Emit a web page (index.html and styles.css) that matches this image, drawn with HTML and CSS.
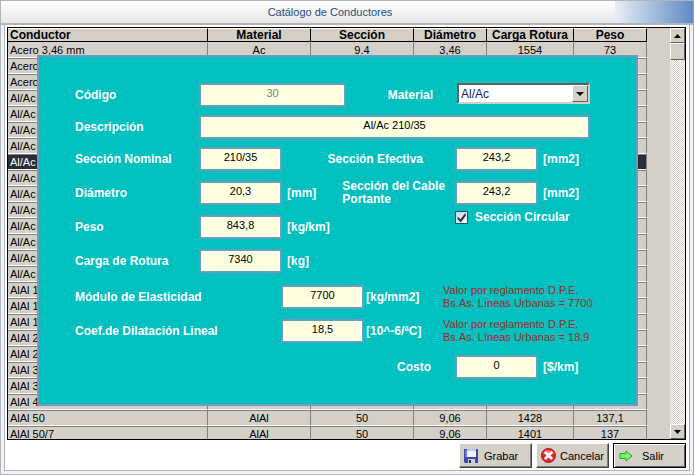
FILE: index.html
```
<!DOCTYPE html>
<html lang="es">
<head>
    <meta charset="UTF-8">
    <meta name="viewport" content="width=device-width, initial-scale=1.0">
    <title>Catálogo de Conductores</title>
    <link rel="stylesheet" href="styles.css">
</head>
<body>
    <header class="titlebar"><h1>Catálogo de Conductores</h1></header>

    <main class="frame">
        <div class="catalog">
            <div class="list">
                <table>
                    <thead>
                        <tr>
                            <th>Conductor</th>
                            <th class="c2">Material</th>
                            <th class="c3">Sección</th>
                            <th class="c4">Diámetro</th>
                            <th class="c5">Carga Rotura</th>
                            <th class="c6">Peso</th>
                        </tr>
                    </thead>
                    <tbody>
                        <tr><td>Acero 3,46 mm</td><td>Ac</td><td>9.4</td><td>3,46</td><td>1554</td><td>73</td></tr>
                        <tr><td>Acero</td><td></td><td></td><td></td><td></td><td></td></tr>
                        <tr><td>Acero</td><td></td><td></td><td></td><td></td><td></td></tr>
                        <tr><td>Al/Ac</td><td></td><td></td><td></td><td></td><td></td></tr>
                        <tr><td>Al/Ac</td><td></td><td></td><td></td><td></td><td></td></tr>
                        <tr><td>Al/Ac</td><td></td><td></td><td></td><td></td><td></td></tr>
                        <tr><td>Al/Ac</td><td></td><td></td><td></td><td></td><td></td></tr>
                        <tr class="selected"><td>Al/Ac</td><td></td><td></td><td></td><td></td><td></td></tr>
                        <tr><td>Al/Ac</td><td></td><td></td><td></td><td></td><td></td></tr>
                        <tr><td>Al/Ac</td><td></td><td></td><td></td><td></td><td></td></tr>
                        <tr><td>Al/Ac</td><td></td><td></td><td></td><td></td><td></td></tr>
                        <tr><td>Al/Ac</td><td></td><td></td><td></td><td></td><td></td></tr>
                        <tr><td>Al/Ac</td><td></td><td></td><td></td><td></td><td></td></tr>
                        <tr><td>Al/Ac</td><td></td><td></td><td></td><td></td><td></td></tr>
                        <tr><td>Al/Ac</td><td></td><td></td><td></td><td></td><td></td></tr>
                        <tr><td>AlAl 1</td><td></td><td></td><td></td><td></td><td></td></tr>
                        <tr><td>AlAl 1</td><td></td><td></td><td></td><td></td><td></td></tr>
                        <tr><td>AlAl 1</td><td></td><td></td><td></td><td></td><td></td></tr>
                        <tr><td>AlAl 2</td><td></td><td></td><td></td><td></td><td></td></tr>
                        <tr><td>AlAl 2</td><td></td><td></td><td></td><td></td><td></td></tr>
                        <tr><td>AlAl 3</td><td></td><td></td><td></td><td></td><td></td></tr>
                        <tr><td>AlAl 3</td><td></td><td></td><td></td><td></td><td></td></tr>
                        <tr><td>AlAl 4</td><td></td><td></td><td></td><td></td><td></td></tr>
                        <tr><td>AlAl 50</td><td>AlAl</td><td>50</td><td>9,06</td><td>1428</td><td>137,1</td></tr>
                        <tr><td>AlAl 50/7</td><td>AlAl</td><td>50</td><td>9,06</td><td>1401</td><td>137</td></tr>
                    </tbody>
                </table>
            </div>
            <div class="scrollbar">
                <button type="button" class="arrow" aria-label="Subir">
                    <svg width="7" height="4" viewBox="0 0 7 4"><path d="M0 4L3.500 0L7 4z"/></svg>
                </button>
                <div class="thumb"></div>
                <div class="track"></div>
                <button type="button" class="arrow" aria-label="Bajar">
                    <svg width="7" height="4" viewBox="0 0 7 4"><path d="M0 0H7L3.500 4z"/></svg>
                </button>
            </div>

            <form class="editor" id="editor">
                <div class="row">
                    <label class="name" for="codigo">Código</label>
                    <input class="wide" type="text" id="codigo" value="30" disabled>
                    <label class="side-name" for="material">Material</label>
                    <div class="select">
                        <select id="material"><option>Al/Ac</option></select>
                        <span class="drop"><svg width="8" height="4" viewBox="0 0 8 4"><path d="M0 0H8L4 4z"/></svg></span>
                    </div>
                </div>
                <div class="row">
                    <label class="name" for="descripcion">Descripción</label>
                    <input class="full" type="text" id="descripcion" value="Al/Ac 210/35">
                </div>

                <div class="columns">
                    <div class="left">
                        <div class="row">
                            <label class="name" for="nominal">Sección Nominal</label>
                            <input type="text" id="nominal" value="210/35">
                        </div>
                        <div class="row">
                            <label class="name" for="diametro">Diámetro</label>
                            <input type="text" id="diametro" value="20,3">
                            <span class="unit">[mm]</span>
                        </div>
                        <div class="row">
                            <label class="name" for="peso">Peso</label>
                            <input type="text" id="peso" value="843,8">
                            <span class="unit">[kg/km]</span>
                        </div>
                        <div class="row">
                            <label class="name" for="carga">Carga de Rotura</label>
                            <input type="text" id="carga" value="7340">
                            <span class="unit">[kg]</span>
                        </div>
                    </div>
                    <div class="right">
                        <div class="row">
                            <label class="side-name apart" for="efectiva">Sección Efectiva</label>
                            <div class="side">
                                <input type="text" id="efectiva" value="243,2">
                                <span class="unit">[mm2]</span>
                            </div>
                        </div>
                        <div class="row">
                            <label class="side-name two-lines" for="portante">Sección del Cable<br>Portante</label>
                            <div class="side">
                                <input type="text" id="portante" value="243,2">
                                <span class="unit">[mm2]</span>
                            </div>
                        </div>
                        <label class="check"><input type="checkbox" checked>Sección Circular</label>
                    </div>
                </div>

                <div class="row">
                    <label class="long-name" for="modulo">Módulo de Elasticidad</label>
                    <input type="text" id="modulo" value="7700">
                    <span class="unit near">[kg/mm2]</span>
                    <p class="note">Valor por reglamento D.P.E.<br>Bs.As. Líneas Urbanas = 7700</p>
                </div>
                <div class="row coef">
                    <label class="long-name" for="coef">Coef.de Dilatación Lineal</label>
                    <input type="text" id="coef" value="18,5">
                    <span class="unit near">[10^-6/ªC]</span>
                    <p class="note">Valor por reglamento D.P.E.<br>Bs.As. Líneas Urbanas = 18,9</p>
                </div>
                <div class="row">
                    <label class="side-name" for="costo">Costo</label>
                    <div class="side">
                        <input type="text" id="costo" value="0">
                        <span class="unit">[$/km]</span>
                    </div>
                </div>
            </form>
        </div>

        <footer class="actions">
            <button type="submit" form="editor">
                <svg width="14" height="14" viewBox="0 0 14 14">
                    <path d="M0 0H14V14H1L0 13z" fill="#3f48a8"/>
                    <path d="M1 1H3V8H1z" fill="#6f7be0"/>
                    <path d="M3 0H12V8H3z" fill="#eef3fb"/>
                    <path d="M3 0H12V2H3z" fill="#b9cdea"/>
                    <path d="M4 10H11V14H4z" fill="#c9cfe0"/>
                    <path d="M5 11H7V14H5z" fill="#23286e"/>
                </svg>
                Grabar
            </button>
            <button type="button" class="cancel">
                <svg width="15" height="15" viewBox="0 0 16 16">
                    <circle cx="8" cy="8" r="7.500" fill="#d9262a" stroke="#b01418"/>
                    <path d="M2 6A6.500 6.500 0 0 1 14 6Q8 8 2 6z" fill="#ee6a66"/>
                    <path d="M5 5L11 11M11 5L5 11" stroke="#fff" stroke-width="3" stroke-linecap="round"/>
                </svg>
                Cancelar
            </button>
            <button type="button" class="default">
                <svg width="14" height="12" viewBox="0 0 14 12">
                    <path d="M1 3.500H7V.800L13 6L7 11.200V8.500H1z" fill="#7df26a" stroke="#1fa82a"/>
                </svg>
                Salir
            </button>
        </footer>
    </main>
</body>
</html>
```
FILE: styles.css
```
* {
    box-sizing: border-box;
}
body {
    margin: 0;
    height: 100vh;
    display: flex;
    flex-direction: column;
    font-family: "Liberation Sans", Arial, sans-serif;
    font-size: 11px;
    line-height: 13px;
    color: #000;
    background-color: #f1f2f6;
    border: 1px solid #b4b5b9;
    border-right-color: #8fa9cc;
}
.titlebar {
    height: 24px;
    padding-right: 34px;
    border-bottom: 2px solid #b4b5b9;
    background: linear-gradient(to right, #e8eef5, #5f8ac4) no-repeat right / 78px 100%,
        linear-gradient(#fff, #e6e6e8);
}
.titlebar h1 {
    margin: 0;
    font-size: 11px;
    font-weight: normal;
    line-height: 22px;
    text-align: center;
    color: #2c4a78;
}
.frame {
    flex: 1;
    min-height: 0;
    display: flex;
    flex-direction: column;
    margin: 0 3px 3px;
    padding: 2px 3px 2px 2px;
    background-color: #fff;
    border: 1px solid #b0b2b8;
    border-top: 0;
    border-right-color: #8fa9cc;
}

/* list */
.catalog {
    flex: 1;
    min-height: 0;
    display: flex;
    position: relative;
    border: 1px solid #000;
    background-color: #d4d0c8;
}
.list {
    flex: 1;
    margin-right: 23px;
    overflow: hidden;
}
table {
    width: 100%;
    table-layout: fixed;
    border-collapse: separate;
    border-spacing: 0;
}
th {
    height: 14px;
    padding: 0;
    font-size: 12px;
    line-height: 12px;
    border-top: 1px solid #fff;
    border-bottom: 1px solid #000;
    border-right: 1px solid #000;
}
td {
    height: 16px;
    padding: 0;
    line-height: 14px;
    text-align: center;
    white-space: nowrap;
    border-top: 1px solid #808080;
    border-bottom: 1px solid #fff;
    border-right: 1px solid #808080;
}
tbody tr:first-child td {
    border-top-color: #d4d0c8;
}
th:first-child,
td:first-child {
    padding-left: 2px;
    text-align: left;
}
.c2,
.c3 {
    width: 103px;
}
.c4,
.c6 {
    width: 73px;
}
.c5 {
    width: 87px;
}
.selected td {
    color: #fff;
    background-color: #2b2d38;
}
.scrollbar {
    width: 15px;
    display: flex;
    flex-direction: column;
}
.arrow,
.thumb,
.drop {
    background-color: #d4d0c8;
    border: 1px solid;
    border-color: #fff #606060 #606060 #fff;
}
.arrow {
    height: 15px;
    padding: 0;
    display: flex;
    align-items: center;
    justify-content: center;
}
.thumb {
    height: 17px;
}
.track {
    flex: 1;
    background: repeating-conic-gradient(#fff 0 25%, #d4d0c8 0 50%) 0 0 / 2px 2px;
}

/* edit panel over the list */
.editor {
    position: absolute;
    top: 27px;
    left: 29px;
    right: 47px;
    padding: 26px 46px 25px 36px;
    background-color: #00c0c0;
    border: 2px solid #6c9cc0;
    display: flex;
    flex-direction: column;
    gap: 8px;
    color: #fff;
    font-size: 12px;
    font-weight: bold;
    white-space: nowrap;
}
.row {
    display: flex;
    align-items: center;
    height: 24px;
}
.name {
    width: 124px;
}
.long-name {
    width: 206px;
}
.side-name {
    margin-left: auto;
    margin-right: 24px;
}
.apart {
    margin-right: 32px;
}
.two-lines {
    margin-right: 10px;
}
.side {
    width: 135px;
    flex-shrink: 0;
    display: flex;
    align-items: center;
}
.editor input[type="text"] {
    width: 83px;
    height: 24px;
    flex-shrink: 0;
    padding: 0 0 4px;
    font-family: inherit;
    font-size: 11px;
    text-align: center;
    color: #000;
    background-color: #ffffe1;
    border: 2px solid #6c9cc0;
    border-radius: 0;
}
.editor .wide[type="text"] {
    width: 147px;
    color: #808080;
}
.editor .full[type="text"] {
    flex: 1;
}
.unit {
    padding-left: 5px;
}
.near {
    padding-left: 2px;
}
.select {
    width: 133px;
    height: 21px;
    align-self: flex-start;
    position: relative;
}
.select select {
    width: 100%;
    height: 100%;
    padding: 0 2px;
    appearance: none;
    font-family: inherit;
    font-size: 12px;
    color: #10206a;
    background-color: #fff;
    border: 2px solid;
    border-color: #606060 #d4d0c8 #d4d0c8 #606060;
    border-radius: 0;
}
.drop {
    position: absolute;
    top: 2px;
    right: 2px;
    bottom: 2px;
    width: 16px;
    display: flex;
    align-items: center;
    justify-content: center;
    pointer-events: none;
}
.columns {
    display: flex;
    margin-bottom: 4px;
}
.columns .row + .row {
    margin-top: 10px;
}
.left {
    width: 240px;
}
.left .name {
    flex-shrink: 0;
}
.right {
    flex: 1;
}
.check {
    width: 135px;
    margin: 6px 0 0 auto;
    display: flex;
    align-items: center;
    gap: 7px;
}
.check input {
    width: 13px;
    height: 13px;
    margin: 0;
    appearance: none;
    background: linear-gradient(135deg, #c4d2e4, #fff);
    border: 1px solid #1c5180;
}
.check input:checked::after {
    content: "";
    display: block;
    height: 11px;
    background-color: #2a3550;
    clip-path: polygon(15% 40%, 40% 65%, 85% 10%, 90% 35%, 42% 95%, 15% 65%);
}
.coef {
    margin: 2px 0 4px;
}
.note {
    margin: 0 0 0 auto;
    width: 147px;
    font-size: 11px;
    font-weight: normal;
    color: #a82828;
}

/* bottom buttons */
.actions {
    display: flex;
    justify-content: flex-end;
    gap: 4px;
    padding-top: 3px;
}
.actions button {
    width: 73px;
    height: 25px;
    padding: 0 0 0 4px;
    display: flex;
    align-items: center;
    gap: 6px;
    font-family: inherit;
    font-size: 11px;
    color: #000;
    background-color: #d4d0c8;
    border: 1px solid;
    border-color: #fff #404040 #404040 #fff;
    box-shadow: inset -1px -1px #808080;
}
.actions svg {
    flex-shrink: 0;
}
.actions .cancel {
    gap: 4px;
}
.actions .default {
    padding-left: 5px;
    gap: 9px;
    border: 1px solid #000;
    box-shadow: inset 1px 1px #fff, inset -1px -1px #606060;
}
```
